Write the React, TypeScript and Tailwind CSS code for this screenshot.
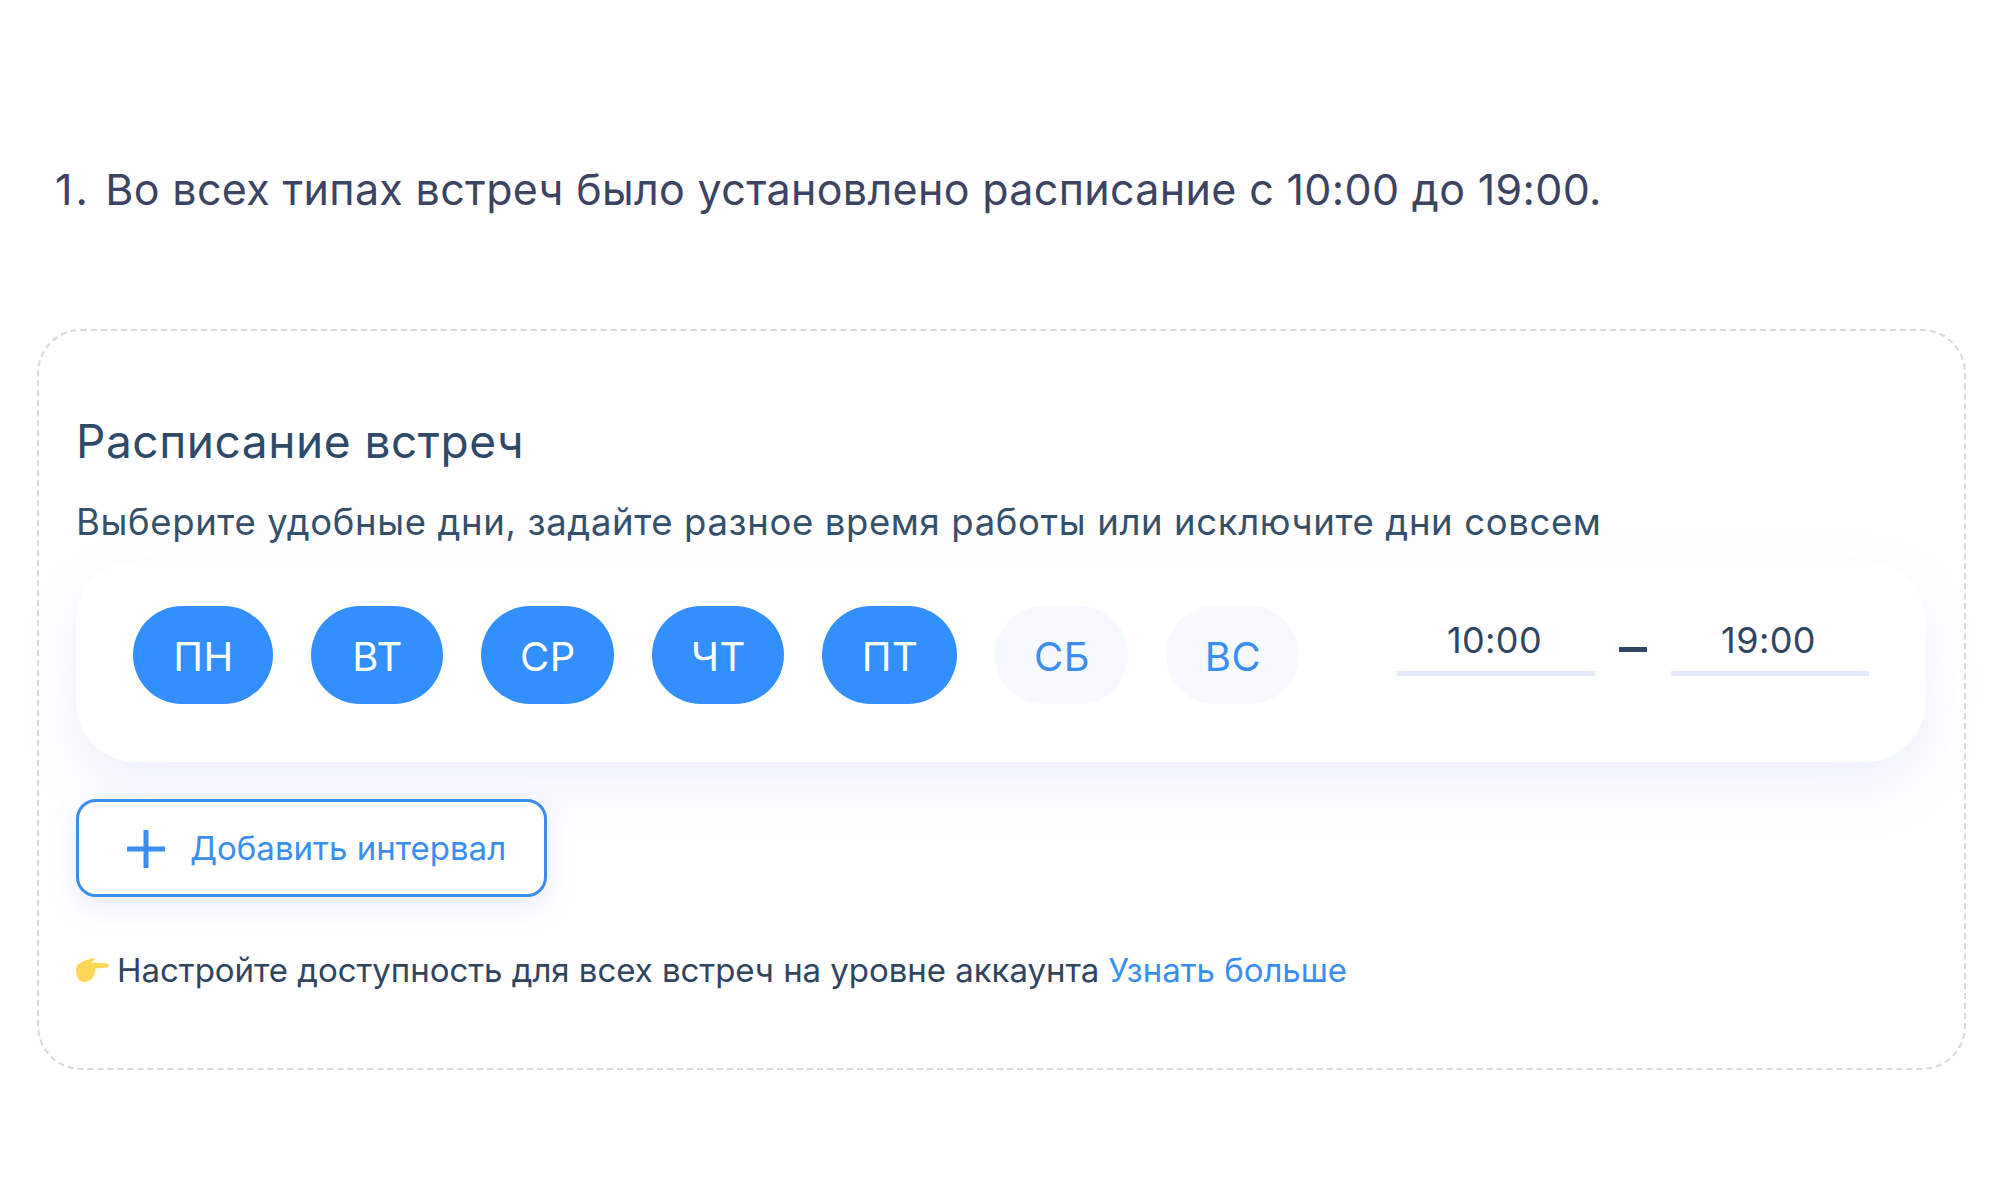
const DAYS = [
  { label: 'ПН', width: 'w-[140px]', active: true },
  { label: 'ВТ', width: 'w-[132px]', active: true },
  { label: 'СР', width: 'w-[133px]', active: true },
  { label: 'ЧТ', width: 'w-[132px]', active: true },
  { label: 'ПТ', width: 'w-[135px]', active: true },
  { label: 'СБ', width: 'w-[133px]', active: false },
  { label: 'ВС', width: 'w-[133px]', active: false },
];

function PointingHand() {
  return (
    <svg width="34" height="28" viewBox="0 0 34 28" className="shrink-0 mt-[2px] -ml-[1px]">
      <path
        d="M1 13C1 8 5 5 9 4L17 1C19 0.5 20 2 18.5 3.5L16 5.5L32 6.5C34.500 6.800 34.500 10.200 32 10.500L20 11.500C20.500 14 20 16 19 17.500C18.500 21 15 24.500 10 25C4 25.500 1 20 1 13Z"
        fill="#fdd858"
      />
    </svg>
  );
}

function TimeField({ value }: { value: string }) {
  return (
    <div className="w-[198px] h-[56px] pr-[3px] flex items-start justify-center border-b-[5px] border-[#e6ebfb] text-[36px] leading-[40px] tracking-[0.4px] text-[#2f4560]">
      {value}
    </div>
  );
}

export default function App() {
  return (
    <div className="w-[2000px] h-[1200px] bg-white font-['Inter','Noto_Sans',sans-serif] overflow-hidden">
      <div className="pt-[160px] pl-[55px] text-[43px] leading-[58px] text-[#3d4462] tracking-[0.33px]">
        <span className="mr-[2px] tracking-[3px]">1.</span> Во всех типах встреч было установлено расписание с 10:00 до 19:00.
      </div>

      <div className="mt-[111px] ml-[37px] w-[1929px] h-[741px] rounded-[44px] border-2 border-dashed border-[#d9d9d9] pl-[37px] pr-[38px] pt-[82px]">
        <h2 className="text-[46px] leading-[56px] text-[#2f4a68] tracking-[0.55px]">Расписание встреч</h2>
        <p className="mt-[28px] text-[36.500px] leading-[50px] text-[#35506b] tracking-[0.63px]">
          Выберите удобные дни, задайте разное время работы или исключите дни совсем
        </p>

        <div className="mt-[14px] w-[1849px] h-[201px] rounded-[60px] bg-white shadow-[0_24px_60px_rgba(90,130,230,0.12)] pl-[57px] pr-[56px] pt-[45px] flex items-start justify-between">
          <div className="flex gap-[38px]">
            {DAYS.map((day) => (
              <div
                key={day.label}
                className={`${day.width} h-[98px] pt-[3px] pl-[1px] rounded-[49px] flex items-center justify-center text-[40px] tracking-[0.5px] ${
                  day.active ? 'bg-[#328ffd] text-white' : 'bg-[#f6f9fe] text-[#3a8ef0]'
                }`}
              >
                {day.label}
              </div>
            ))}
          </div>
          <div className="flex items-start mt-[14px] -ml-[2px]">
            <TimeField value="10:00" />
            <div className="w-[28px] h-[5px] mx-[24px] mt-[27px] bg-[#2f4560]" />
            <TimeField value="19:00" />
          </div>
        </div>

        <button className="mt-[37px] w-[471px] h-[98px] pt-[1px] rounded-[20px] border-[3px] border-[#3a8ef0] bg-white shadow-[0_10px_30px_rgba(90,130,230,0.14)] flex items-center pl-[48px]">
          <svg width="38" height="38" viewBox="0 0 38 38" className="shrink-0">
            <path d="M19 1V37M1 19H37" stroke="#3a8ef0" strokeWidth="5" strokeLinecap="round" />
          </svg>
          <span className="ml-[25px] text-[33px] text-[#3a8ef0]">Добавить интервал</span>
        </button>

        <div className="mt-[51px] flex items-center text-[33px] leading-[44px] text-[#2f4560] tracking-[-0.04px]">
          <PointingHand />
          <span className="ml-[8px]">Настройте доступность для всех встреч на уровне аккаунта</span>
          <a className="ml-[9px] text-[#3a8ef0]">Узнать больше</a>
        </div>
      </div>
    </div>
  );
}
